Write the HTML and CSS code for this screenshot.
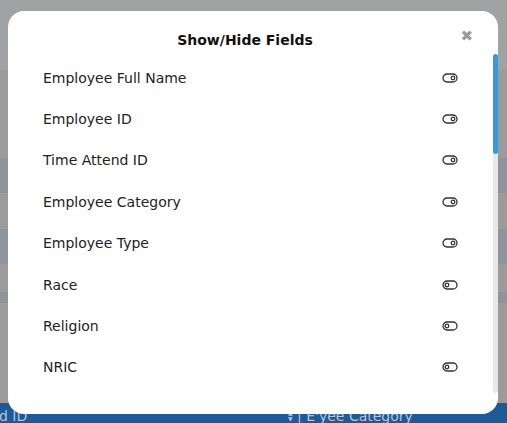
FILE: index.html
```html
<!DOCTYPE html>
<html>

<head>
    <title>Show/Hide Fields</title>
    <link rel="stylesheet" href="styles.css">
</head>

<body>
    <div class="page">
        <div class="band band-head"></div>
        <div class="band band-row" style="height: 88px"></div>
        <div class="band band-alt" style="height: 35px"></div>
        <div class="band band-row" style="height: 36px"></div>
        <div class="band band-alt" style="height: 35px"></div>
        <div class="band band-row" style="height: 28px"></div>
        <div class="band band-dark" style="height: 11px"></div>
        <div class="band band-row" style="height: 100px"></div>
        <div class="grid-head">
            <span class="col-a">d ID</span>
            <span class="col-b"><span class="sort">&#9650;<br>&#9660;</span> | E'yee Category</span>
        </div>
    </div>

    <div class="modal">
        <div class="modal-title">Show/Hide Fields</div>
        <span class="close">&#10006;</span>
        <ul class="field-list">
            <li><span>Employee Full Name</span><svg class="tgl" viewBox="0 0 16 10"><rect x="1" y="1" width="14" height="8" rx="4"/><circle cx="11" cy="5" r="1.8"/></svg></li>
            <li><span>Employee ID</span><svg class="tgl" viewBox="0 0 16 10"><rect x="1" y="1" width="14" height="8" rx="4"/><circle cx="11" cy="5" r="1.8"/></svg></li>
            <li><span>Time Attend ID</span><svg class="tgl" viewBox="0 0 16 10"><rect x="1" y="1" width="14" height="8" rx="4"/><circle cx="11" cy="5" r="1.8"/></svg></li>
            <li><span>Employee Category</span><svg class="tgl" viewBox="0 0 16 10"><rect x="1" y="1" width="14" height="8" rx="4"/><circle cx="11" cy="5" r="1.8"/></svg></li>
            <li><span>Employee Type</span><svg class="tgl" viewBox="0 0 16 10"><rect x="1" y="1" width="14" height="8" rx="4"/><circle cx="11" cy="5" r="1.8"/></svg></li>
            <li><span>Race</span><svg class="tgl" viewBox="0 0 16 10"><rect x="1" y="1" width="14" height="8" rx="4"/><circle cx="5" cy="5" r="1.8"/></svg></li>
            <li><span>Religion</span><svg class="tgl" viewBox="0 0 16 10"><rect x="1" y="1" width="14" height="8" rx="4"/><circle cx="5" cy="5" r="1.8"/></svg></li>
            <li><span>NRIC</span><svg class="tgl" viewBox="0 0 16 10"><rect x="1" y="1" width="14" height="8" rx="4"/><circle cx="5" cy="5" r="1.8"/></svg></li>
        </ul>
        <div class="scroll-track"><div class="scroll-thumb"></div></div>
    </div>
</body>

</html>
```

FILE: styles.css
```css
body {
    margin: 0;
    overflow: hidden;
    font-family: "DejaVu Sans", sans-serif;
}

.page {
    width: 507px;
    height: 423px;
    display: flex;
    flex-direction: column;
    background-color: #9b9b9b;
}

.band-head {
    height: 70px;
    background-color: #a1a2a4;
}

.band-row {
    background-color: #9b9b9b;
}

.band-alt {
    background-color: #8f939b;
}

.band-dark {
    background-color: #929396;
}

.grid-head {
    flex: 1;
    background-color: #1e5a98;
    color: #b8c4d6;
    font-size: 14px;
    position: relative;
    overflow: hidden;
}

.col-a {
    position: absolute;
    left: -1px;
    top: 5px;
}

.col-b {
    position: absolute;
    left: 288px;
    top: 5px;
}

.sort {
    display: inline-block;
    font-size: 6px;
    line-height: 6px;
    vertical-align: top;
    margin-top: 2px;
}

.modal {
    position: absolute;
    left: 8px;
    top: 11px;
    width: 490px;
    height: 403px;
    background: #fff;
    border-radius: 16px;
    overflow: hidden;
}

.modal-title {
    text-align: center;
    font-weight: bold;
    font-size: 14px;
    color: #111;
    padding-top: 21px;
    padding-right: 16px;
    height: 22px;
}

.close {
    position: absolute;
    right: 25px;
    top: 16px;
    color: #9a9a9a;
    font-size: 15px;
    font-weight: bold;
}

.field-list {
    list-style: none;
    margin: 0;
    padding: 3px 0 0 0;
    height: 336px;
    overflow: hidden;
}

.field-list li {
    height: 41.4px;
    display: flex;
    align-items: center;
    justify-content: space-between;
    padding-left: 35px;
    padding-right: 40px;
    font-size: 14px;
    color: #222;
}

.tgl {
    width: 16px;
    height: 10px;
    fill: none;
    stroke: #333;
    stroke-width: 1.3;
}

.scroll-track {
    position: absolute;
    left: 485px;
    top: 43px;
    width: 5px;
    height: 339px;
    background: #e8e8e8;
    border-radius: 3px;
}

.scroll-thumb {
    height: 100px;
    background: #3a9ad9;
    border-radius: 3px;
}
```
